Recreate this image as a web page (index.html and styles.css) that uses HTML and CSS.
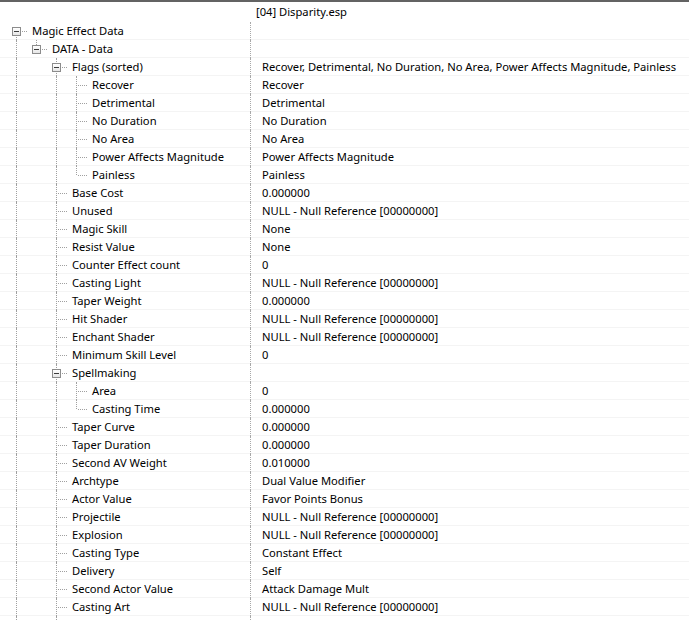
FILE: index.html
```html
<!DOCTYPE html>
<html lang="en">
<head>
    <meta charset="UTF-8">
    <title>Magic Effect Data</title>
    <link rel="stylesheet" href="styles.css">
</head>
<body>
    <div class="view">
        <div class="header">
            <div class="name"></div>
            <div class="value">[04] Disparity.esp</div>
        </div>

        <!-- Magic Effect Data -->
        <div class="row">
            <div class="name"><span class="g box first"><i></i></span><span class="label">Magic Effect Data</span></div>
            <div class="value"></div>
        </div>
        <div class="row">
            <div class="name"><span class="g v"></span><span class="g box last"><i></i></span><span class="label">DATA - Data</span></div>
            <div class="value"></div>
        </div>

        <!-- Flags -->
        <div class="row">
            <div class="name"><span class="g v"></span><span class="g"></span><span class="g box mid"><i></i></span><span class="label">Flags (sorted)</span></div>
            <div class="value">Recover, Detrimental, No Duration, No Area, Power Affects Magnitude, Painless</div>
        </div>
        <div class="row">
            <div class="name"><span class="g v"></span><span class="g"></span><span class="g v"></span><span class="g t"></span><span class="label">Recover</span></div>
            <div class="value">Recover</div>
        </div>
        <div class="row">
            <div class="name"><span class="g v"></span><span class="g"></span><span class="g v"></span><span class="g t"></span><span class="label">Detrimental</span></div>
            <div class="value">Detrimental</div>
        </div>
        <div class="row">
            <div class="name"><span class="g v"></span><span class="g"></span><span class="g v"></span><span class="g t"></span><span class="label">No Duration</span></div>
            <div class="value">No Duration</div>
        </div>
        <div class="row">
            <div class="name"><span class="g v"></span><span class="g"></span><span class="g v"></span><span class="g t"></span><span class="label">No Area</span></div>
            <div class="value">No Area</div>
        </div>
        <div class="row">
            <div class="name"><span class="g v"></span><span class="g"></span><span class="g v"></span><span class="g t"></span><span class="label">Power Affects Magnitude</span></div>
            <div class="value">Power Affects Magnitude</div>
        </div>
        <div class="row">
            <div class="name"><span class="g v"></span><span class="g"></span><span class="g v"></span><span class="g l"></span><span class="label">Painless</span></div>
            <div class="value">Painless</div>
        </div>

        <!-- Data fields -->
        <div class="row">
            <div class="name"><span class="g v"></span><span class="g"></span><span class="g t"></span><span class="label">Base Cost</span></div>
            <div class="value">0.000000</div>
        </div>
        <div class="row">
            <div class="name"><span class="g v"></span><span class="g"></span><span class="g t"></span><span class="label">Unused</span></div>
            <div class="value">NULL - Null Reference [00000000]</div>
        </div>
        <div class="row">
            <div class="name"><span class="g v"></span><span class="g"></span><span class="g t"></span><span class="label">Magic Skill</span></div>
            <div class="value">None</div>
        </div>
        <div class="row">
            <div class="name"><span class="g v"></span><span class="g"></span><span class="g t"></span><span class="label">Resist Value</span></div>
            <div class="value">None</div>
        </div>
        <div class="row">
            <div class="name"><span class="g v"></span><span class="g"></span><span class="g t"></span><span class="label">Counter Effect count</span></div>
            <div class="value">0</div>
        </div>
        <div class="row">
            <div class="name"><span class="g v"></span><span class="g"></span><span class="g t"></span><span class="label">Casting Light</span></div>
            <div class="value">NULL - Null Reference [00000000]</div>
        </div>
        <div class="row">
            <div class="name"><span class="g v"></span><span class="g"></span><span class="g t"></span><span class="label">Taper Weight</span></div>
            <div class="value">0.000000</div>
        </div>
        <div class="row">
            <div class="name"><span class="g v"></span><span class="g"></span><span class="g t"></span><span class="label">Hit Shader</span></div>
            <div class="value">NULL - Null Reference [00000000]</div>
        </div>
        <div class="row">
            <div class="name"><span class="g v"></span><span class="g"></span><span class="g t"></span><span class="label">Enchant Shader</span></div>
            <div class="value">NULL - Null Reference [00000000]</div>
        </div>
        <div class="row">
            <div class="name"><span class="g v"></span><span class="g"></span><span class="g t"></span><span class="label">Minimum Skill Level</span></div>
            <div class="value">0</div>
        </div>

        <!-- Spellmaking -->
        <div class="row">
            <div class="name"><span class="g v"></span><span class="g"></span><span class="g box mid"><i></i></span><span class="label">Spellmaking</span></div>
            <div class="value"></div>
        </div>
        <div class="row">
            <div class="name"><span class="g v"></span><span class="g"></span><span class="g v"></span><span class="g t"></span><span class="label">Area</span></div>
            <div class="value">0</div>
        </div>
        <div class="row">
            <div class="name"><span class="g v"></span><span class="g"></span><span class="g v"></span><span class="g l"></span><span class="label">Casting Time</span></div>
            <div class="value">0.000000</div>
        </div>

        <div class="row">
            <div class="name"><span class="g v"></span><span class="g"></span><span class="g t"></span><span class="label">Taper Curve</span></div>
            <div class="value">0.000000</div>
        </div>
        <div class="row">
            <div class="name"><span class="g v"></span><span class="g"></span><span class="g t"></span><span class="label">Taper Duration</span></div>
            <div class="value">0.000000</div>
        </div>
        <div class="row">
            <div class="name"><span class="g v"></span><span class="g"></span><span class="g t"></span><span class="label">Second AV Weight</span></div>
            <div class="value">0.010000</div>
        </div>
        <div class="row">
            <div class="name"><span class="g v"></span><span class="g"></span><span class="g t"></span><span class="label">Archtype</span></div>
            <div class="value">Dual Value Modifier</div>
        </div>
        <div class="row">
            <div class="name"><span class="g v"></span><span class="g"></span><span class="g t"></span><span class="label">Actor Value</span></div>
            <div class="value">Favor Points Bonus</div>
        </div>
        <div class="row">
            <div class="name"><span class="g v"></span><span class="g"></span><span class="g t"></span><span class="label">Projectile</span></div>
            <div class="value">NULL - Null Reference [00000000]</div>
        </div>
        <div class="row">
            <div class="name"><span class="g v"></span><span class="g"></span><span class="g t"></span><span class="label">Explosion</span></div>
            <div class="value">NULL - Null Reference [00000000]</div>
        </div>
        <div class="row">
            <div class="name"><span class="g v"></span><span class="g"></span><span class="g t"></span><span class="label">Casting Type</span></div>
            <div class="value">Constant Effect</div>
        </div>
        <div class="row">
            <div class="name"><span class="g v"></span><span class="g"></span><span class="g t"></span><span class="label">Delivery</span></div>
            <div class="value">Self</div>
        </div>
        <div class="row">
            <div class="name"><span class="g v"></span><span class="g"></span><span class="g t"></span><span class="label">Second Actor Value</span></div>
            <div class="value">Attack Damage Mult</div>
        </div>
        <div class="row">
            <div class="name"><span class="g v"></span><span class="g"></span><span class="g t"></span><span class="label">Casting Art</span></div>
            <div class="value">NULL - Null Reference [00000000]</div>
        </div>
        <div class="row">
            <div class="name"><span class="g v"></span><span class="g"></span><span class="g t"></span><span class="label"></span></div>
            <div class="value"></div>
        </div>
    </div>
</body>
</html>
```
FILE: styles.css
```css
html, body {
    margin: 0;
    padding: 0;
    background: #fff;
    overflow: hidden;
}
.view {
    font-family: 'Noto Sans', sans-serif;
    font-size: 11.2px;
    color: #000;
    border-top: 2px solid #636363;
}
.header {
    display: grid;
    grid-template-columns: 250px 1fr;
    height: 20px;
    line-height: 20px;
}
.header .value {
    padding-left: 6px;
}
.row {
    display: grid;
    grid-template-columns: 250px 1fr;
    height: 18px;
    line-height: 18px;
    box-shadow: inset 0 -1px 0 #f4f4f4;
}
.name {
    display: flex;
    padding-left: 6px;
    white-space: nowrap;
    overflow: hidden;
}
.row .value {
    border-left: 1px dotted #a8a8a8;
    padding-left: 11px;
    white-space: nowrap;
}
.label {
    padding-left: 6px;
}

/* tree guide columns */
.g {
    position: relative;
    flex: none;
    width: 20px;
    height: 18px;
}
.g.v::before,
.g.t::before,
.g.l::before,
.g.box::before {
    content: '';
    position: absolute;
    left: 10px;
    top: 0;
    height: 18px;
    border-left: 1px dotted #a0a0a0;
}
.g.l::before,
.g.box.last::before {
    height: 9px;
}
.g.box.first::before {
    top: 9px;
    height: 9px;
}
.g.t::after,
.g.l::after,
.g.box::after {
    content: '';
    position: absolute;
    left: 12px;
    top: 9px;
    width: 9px;
    border-top: 1px dotted #a0a0a0;
}
.g.box::after {
    left: 16px;
    width: 5px;
}
.g.box i {
    position: absolute;
    left: 6px;
    top: 5px;
    width: 7px;
    height: 7px;
    border: 1px solid #8c8c8c;
    background: linear-gradient(#fff, #e6e6e6);
    z-index: 1;
}
.g.box i::after {
    content: '';
    position: absolute;
    left: 1px;
    top: 3px;
    width: 5px;
    height: 1px;
    background: #3c3c3c;
}
```
